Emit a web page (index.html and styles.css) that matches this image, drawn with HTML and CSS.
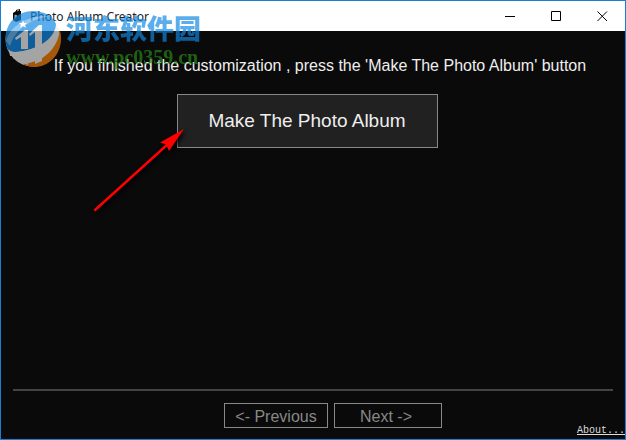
FILE: index.html
```html
<!DOCTYPE html>
<html lang="en">
<head>
    <meta charset="UTF-8">
    <meta name="viewport" content="width=device-width, initial-scale=1.0">
    <title>Photo Album Creator</title>
    <link rel="stylesheet" href="styles.css">
</head>
<body>
    <div class="window">
        <header class="titlebar">
            <svg class="app-icon" width="10" height="14" viewBox="0 0 10 14">
                <path d="M1 4 L4 2 L4 1 L8 0 L8 2 L9 2 L9 11 L4 13 L1 11 Z" fill="#080808"/>
                <path d="M5 2 L7 1 M3 6 V10 M3 6 L5 7 L3 8" stroke="#aaa" fill="none"/>
            </svg>
            <h1>Photo Album Creator</h1>
            <div class="controls">
                <button aria-label="Minimize">
                    <svg width="11" height="11" viewBox="0 0 11 11"><path d="M0 5.5 H10"/></svg>
                </button>
                <button aria-label="Maximize">
                    <svg width="11" height="11" viewBox="0 0 11 11"><path d="M.5 .5 H9.5 V9.5 H.5 Z"/></svg>
                </button>
                <button aria-label="Close">
                    <svg width="11" height="11" viewBox="0 0 11 11"><path d="M.5 .5 L10 10 M10 .5 L.5 10"/></svg>
                </button>
            </div>
        </header>

        <main class="content">
            <p class="message">If you finished the customization , press the 'Make The Photo Album' button</p>
            <button class="make">Make The Photo Album</button>
        </main>

        <footer class="footer">
            <div class="nav">
                <button>&lt;- Previous</button>
                <button class="next">Next -&gt;</button>
            </div>
            <a class="about" href="#about">About...</a>
        </footer>

        <svg class="arrow" width="100" height="92" viewBox="0 0 100 92">
            <path d="M6 84 L79 18" stroke="#f00" stroke-width="2.4" stroke-linecap="round"/>
            <path d="M95 3 L71 16.5 L77 18.5 L80 25 Z" fill="#f00"/>
        </svg>

        <div class="watermark">
            <svg width="58" height="58" viewBox="0 0 58 58">
                <circle cx="28" cy="29" r="27.5" fill="#eee"/>
                <!-- upper and lower halves of the globe -->
                <path d="M1 34 C-2 15 11 1 28 1 C39 1 48 6 51 14 C50 30 30 41 9 42 C4 42 2 39 1 34 Z" fill="#1087e2"/>
                <path d="M55 20 C60 42 45 57 29 57 C25 57 21 56 18 54 C38 52 52 40 55 20 Z" fill="#ef7f08"/>
                <!-- rings -->
                <path d="M1 31 C5 16 22 5 45 6 C25 9 10 20 5 36 Z" fill="#eee" opacity=".4"/>
                <path d="M47 6 C60 17 46 38 12 42 C9 42 5 42 4 39 L5 46 C32 48 64 26 47 6 Z" fill="#eee"/>
                <!-- towers -->
                <path d="M10 28 L20 20 H23 V39 H16 V27 L11 30 Z" fill="#eee"/>
                <path d="M24 24 L34 15 H37 V36 L30 38 V22 L25 26 Z" fill="#eee"/>
                <path d="M16 45 H23 V55 L16 52 Z M30 44 L37 41 V51 L30 54 Z" fill="#eee"/>
                <path d="M18 10 L19 13 L22 13 L20 15 L21 18 L18 16 L15 18 L16 15 L14 13 L17 13 Z" fill="#fff"/>
            </svg>
            <div class="site">
                <span class="site-name" lang="zh-CN">河东软件园</span>
                <span class="site-url">www.pc0359.cn</span>
            </div>
        </div>
    </div>
</body>
</html>
```
FILE: styles.css
```css
* {
    box-sizing: border-box;
}
body {
    margin: 0;
    font-family: "Liberation Sans", Arial, sans-serif;
    font-size: 16px;
    background: #0a0a0a;
    color: #eee;
}
button {
    font: inherit;
    padding: 0;
}
.window {
    position: relative;
    display: flex;
    flex-direction: column;
    min-height: 100vh;
    border: 1px solid #1a7fd4;
}
.titlebar {
    display: flex;
    align-items: center;
    height: 30px;
    padding-left: 11px;
    background: #fff;
    color: #222;
}
.app-icon {
    margin-right: 8px;
}
h1 {
    flex: 1;
    margin: 0;
    font-family: "Noto Sans", sans-serif;
    font-size: 12px;
    font-weight: normal;
}
.controls {
    display: flex;
    height: 100%;
}
.controls button {
    display: flex;
    align-items: center;
    justify-content: center;
    width: 46px;
    border: 0;
    background: none;
}
.controls path {
    fill: none;
    stroke: #000;
}
.content {
    flex: 1;
    display: flex;
    flex-direction: column;
    align-items: center;
    padding: 24px 12px;
}
.message {
    margin: 0 0 17px 14px;
    line-height: 22px;
    white-space: nowrap;
}
.make {
    width: 261px;
    height: 54px;
    margin-right: 12px;
    border: 1px solid #888;
    background: #212121;
    color: #eee;
    font-size: 19px;
}
.footer {
    display: flex;
    flex-direction: column;
    margin-left: 12px;
}
.nav {
    display: flex;
    justify-content: center;
    gap: 6px;
    margin-right: 12px;
    padding: 12px 0 0 40px;
    border-top: 2px solid #444;
}
.nav button {
    width: 104px;
    height: 25px;
    padding-top: 2px;
    border: 1px solid #888;
    background: transparent;
    color: #888;
}
.nav .next {
    width: 108px;
    padding-right: 4px;
}
.about {
    align-self: flex-end;
    margin-top: -5px;
    color: #ddd;
    font-family: "Liberation Mono", monospace;
    font-size: 10px;
    line-height: 16px;
}
.arrow {
    position: absolute;
    left: 88px;
    top: 125px;
    fill: none;
    filter: drop-shadow(2px 2px 2px #000);
    pointer-events: none;
}
.watermark {
    position: absolute;
    left: 4px;
    top: 9px;
    display: flex;
    gap: 3px;
    opacity: .68;
    pointer-events: none;
}
.site {
    display: flex;
    flex-direction: column;
    padding-top: 2px;
    white-space: nowrap;
}
.site-name {
    color: #1087e2;
    font-family: "Noto Sans CJK SC", sans-serif;
    font-size: 27px;
    font-weight: 900;
    line-height: 32px;
}
.site-url {
    color: #288a18;
    font-family: "Liberation Serif", serif;
    font-size: 20px;
    font-weight: bold;
    line-height: 26px;
}
```
